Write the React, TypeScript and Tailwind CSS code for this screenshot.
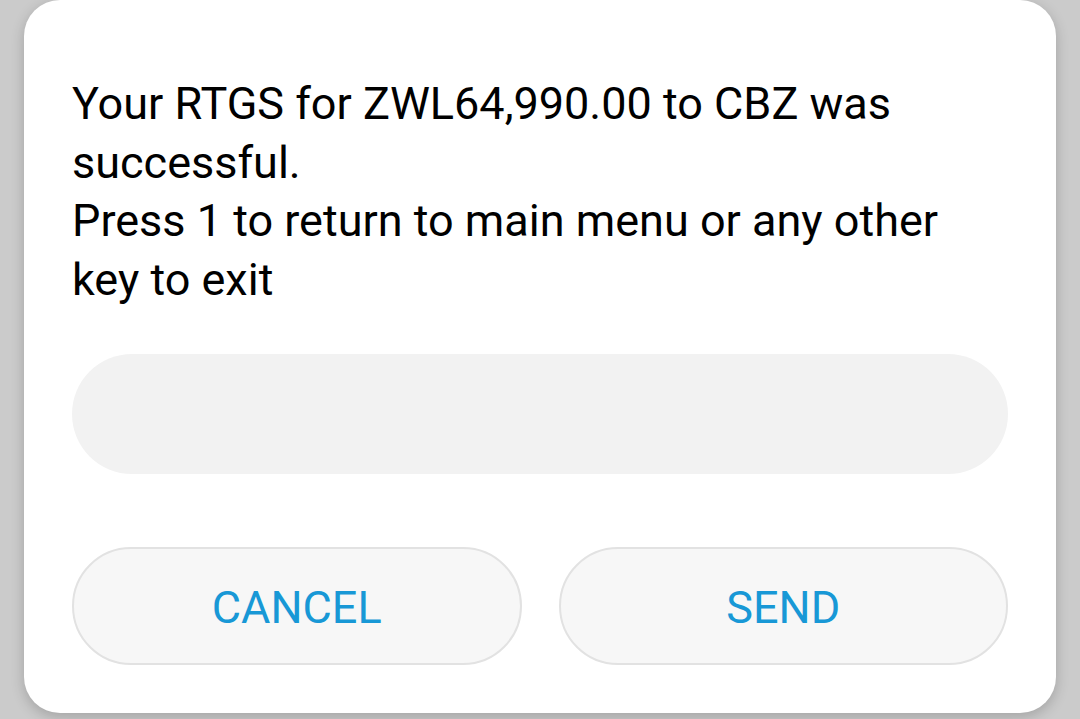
import React from 'react';

const App = () => {
    return (
        <div className="w-[1080px] h-[719px] bg-[#cbcbcb] overflow-hidden font-['Roboto',sans-serif]">
            <div className="ml-6 w-[1032px] h-[713px] bg-white rounded-[36px] shadow-[0_4px_14px_rgba(0,0,0,0.2)] flex flex-col px-12 pt-[75px] pb-12">
                <p className="text-[45px] leading-[58.5px] text-black">
                    Your RTGS for ZWL64,990.00 to CBZ was successful.
                    <br />
                    Press 1 to return to main menu or any other key to exit
                </p>

                <div className="mt-[45px] h-[120px] rounded-full bg-[#f2f2f2]" />

                <div className="mt-auto flex gap-[37px]">
                    <button className="flex-1 h-[118px] pt-[3px] rounded-full border-2 border-[#e2e2e2] bg-[#f7f7f7] text-[45px] text-[#1898d6]">
                        CANCEL
                    </button>
                    <button className="flex-1 h-[118px] pt-[3px] rounded-full border-2 border-[#e2e2e2] bg-[#f7f7f7] text-[45px] text-[#1898d6]">
                        SEND
                    </button>
                </div>
            </div>
        </div>
    );
};

export default App;
